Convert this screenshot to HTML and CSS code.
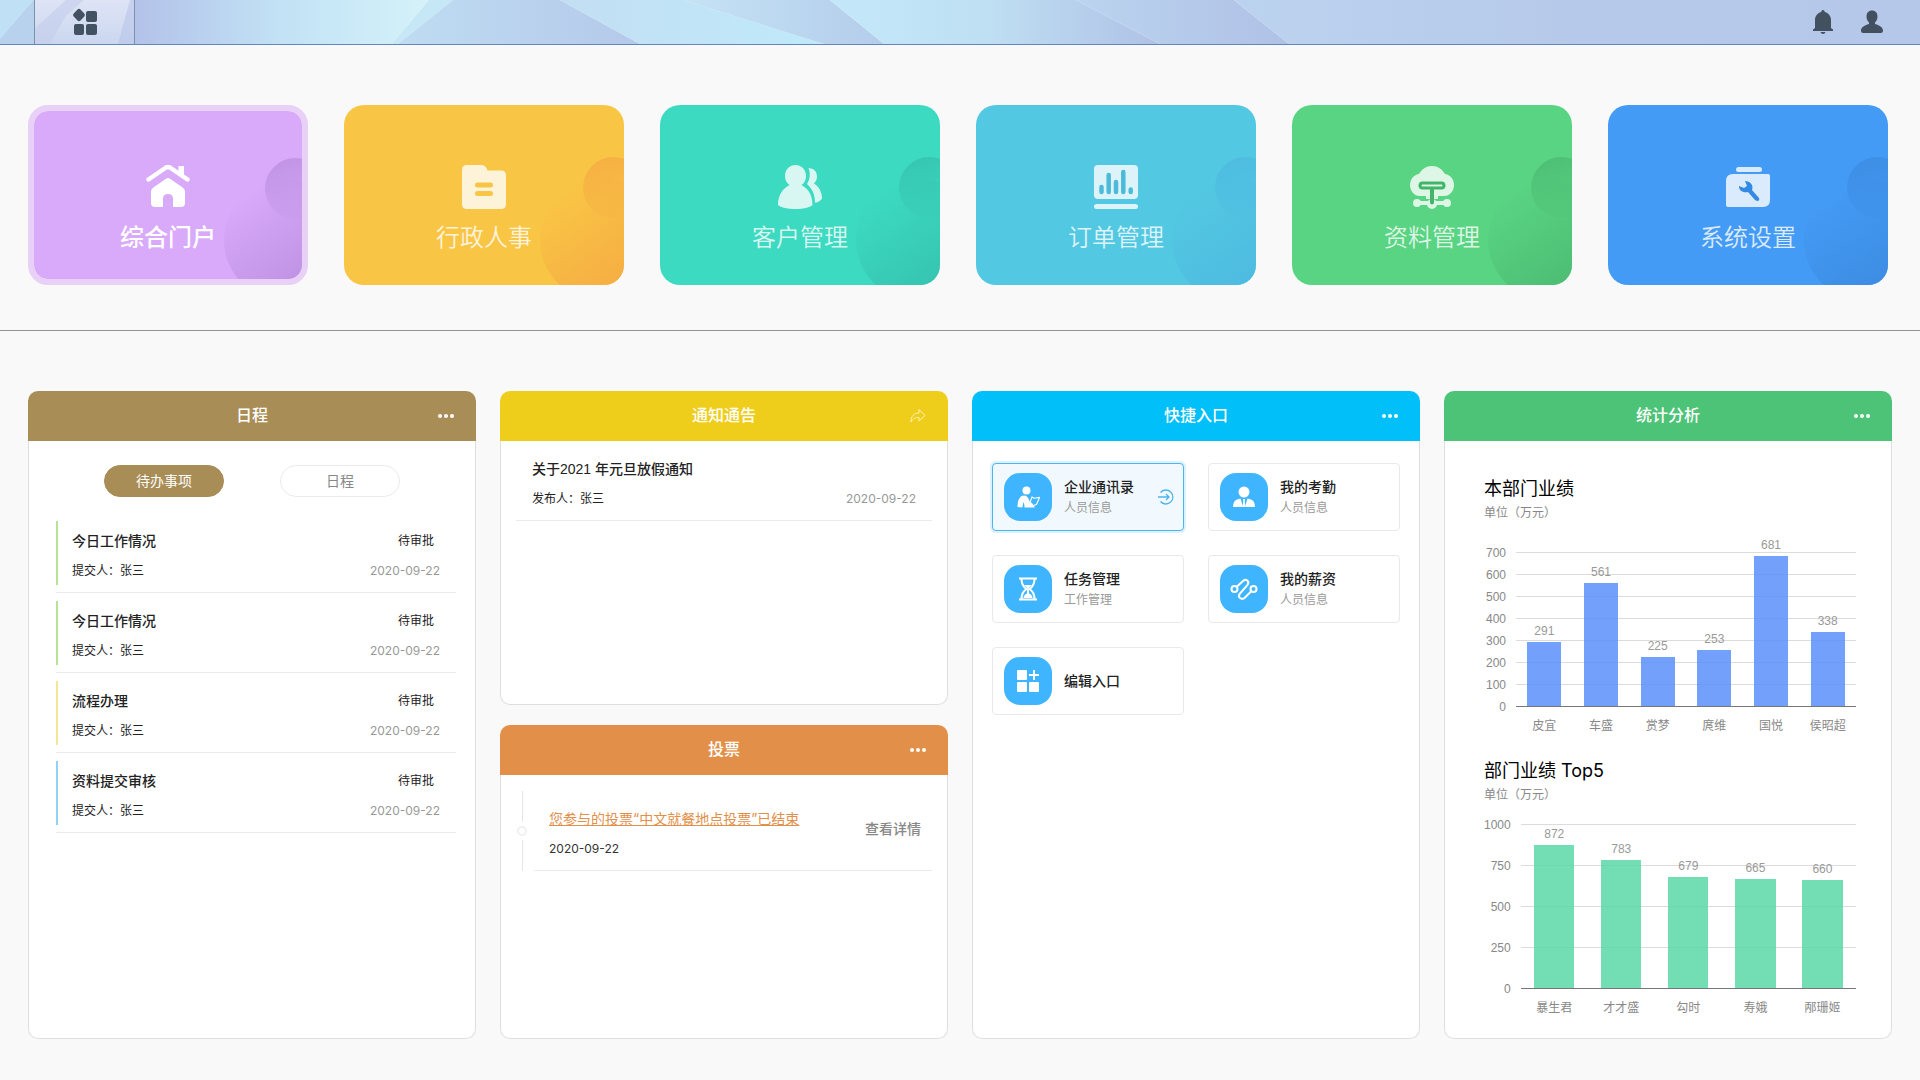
FILE: index.html
```html
<!DOCTYPE html>
<html lang="zh-CN">
<head>
<meta charset="utf-8">
<meta name="viewport" content="width=device-width, initial-scale=1">
<title>综合门户</title>
<link rel="stylesheet" href="styles.css">
</head>
<body>
<header class="topbar">
  <svg class="topbar-art" viewBox="0 0 1920 45" preserveAspectRatio="none" aria-hidden="true">
    <defs>
      <linearGradient id="g1"><stop offset="0" stop-color="#b3c2e9"/><stop offset=".5" stop-color="#c2e2f5"/><stop offset="1" stop-color="#d5f2fa"/></linearGradient>
      <linearGradient id="g2"><stop offset="0" stop-color="#bfdcf2"/><stop offset="1" stop-color="#b5c9ea"/></linearGradient>
      <linearGradient id="g3"><stop offset="0" stop-color="#c3def3"/><stop offset="1" stop-color="#bfeafa"/></linearGradient>
      <linearGradient id="g4"><stop offset="0" stop-color="#c5e2f5"/><stop offset="1" stop-color="#b4cdeb"/></linearGradient>
      <linearGradient id="g5"><stop offset="0" stop-color="#c4e8fa"/><stop offset=".45" stop-color="#bfe0f3"/><stop offset="1" stop-color="#b0c2e6"/></linearGradient>
      <linearGradient id="g6"><stop offset="0" stop-color="#bbd4ef"/><stop offset="1" stop-color="#b0c1e6"/></linearGradient>
      <linearGradient id="g7"><stop offset="0" stop-color="#bcd3ef"/><stop offset=".5" stop-color="#b6c9ea"/><stop offset="1" stop-color="#b5c8ea"/></linearGradient>
      <linearGradient id="g8" x2="0" y2="1"><stop offset="0" stop-color="#dfe4f6"/><stop offset="1" stop-color="#cad7ef"/></linearGradient>
    </defs>
    <path fill="#c0e0f5" d="M0 0H60L0 45z"/>
    <path fill="#b8d2ee" d="M0 40L34 0H140V45H0z"/>
    <path fill="url(#g1)" d="M135 0H429L392 45H135z"/>
    <path fill="#c6e7f6" d="M429 0H453L398 45H392z"/>
    <path fill="url(#g2)" d="M453 0H560L640 45H398z"/>
    <path fill="url(#g3)" d="M560 0H683L824 45H640z"/>
    <path fill="url(#g4)" d="M683 0H830L884 45H824z"/>
    <path fill="url(#g5)" d="M830 0H1076L1160 45H884z"/>
    <path fill="url(#g6)" d="M1076 0H1234L1289 45H1160z"/>
    <path fill="url(#g7)" d="M1234 0H1920V45H1289z"/>
    <path fill="url(#g8)" d="M34 0H135V45H34z"/>
    <path fill="#c3cdeb" opacity=".6" d="M66 0H84L66 16L50 45H34V30z"/>
    <path fill="#b9c5e9" opacity=".6" d="M135 0V45H118L130 0z"/>
  </svg>
  <button class="apps" type="button" aria-label="应用">
    <svg width="28" height="28" viewBox="0 0 28 28" fill="#435263"><path d="M8 .8q.9 0 1.500.7l4 4.300q.9 1.200 0 2.400l-4 4.300q-1.500 1.300-3 0l-4-4.300q-.9-1.200 0-2.400l4-4.300q.6-.7 1.500-.7z"/><rect x="15" y="3" width="11" height="11" rx="2"/><rect x="3" y="16" width="10" height="11" rx="2"/><rect x="15" y="16" width="11" height="11" rx="2"/></svg>
  </button>
  <div class="tools">
    <button class="tool" type="button" aria-label="消息"><svg width="24" height="26" viewBox="0 0 24 26" fill="#42505f"><path d="M12 1c1 0 1.600.8 1.800 2 3.700 1 6.200 4 6.200 8v8l2 1.500V22H2v-1.500L4 19v-8c0-4 2.500-7 6.200-8 .2-1.200.8-2 1.800-2zM9.500 23h5q-.5 2-2.500 2t-2.500-2z"/></svg></button>
    <button class="tool" type="button" aria-label="用户"><svg width="24" height="26" viewBox="0 0 24 26" fill="#42505f"><path d="M12 1.500c3.500 0 5.500 2.700 5.500 5.800 0 3-1 4.700-2.500 6.200v1.500c5 1.500 8 3.500 8 6.500 0 1.500-.7 2.500-2 2.500H3c-1.300 0-2-1-2-2.500 0-3 3-5 8-6.500v-1.500C7.500 12 6.500 10.300 6.500 7.300c0-3.100 2-5.800 5.500-5.800z"/></svg></button>
  </div>
</header>

<nav class="modules">
  <a class="module purple current" href="#"><svg width="44" height="44" viewBox="0 0 44 44"><path d="M2.500 14.500L20 2.500q2-1.300 4 0l17.500 12" fill="none" stroke="#fff" stroke-width="4.500" stroke-linecap="round" stroke-linejoin="round"/><path d="M32.500 1H38v10l-5.500-3.500z" fill="#fff"/><path d="M20 13.800q2-1.500 4 0l13 9q2 1.500 2 4V38q0 4-4 4h-8V34q0-5-5-5t-5 5v8H9q-4 0-4-4V26.800q0-2.500 2-4z" fill="#fff"/></svg><span>综合门户</span></a>
  <a class="module yellow" href="#"><svg width="44" height="44" viewBox="0 0 44 44"><path fill-rule="evenodd" fill="#fff" d="M5 0H19q5 0 6.500 5.500H39q5 0 5 5V39q0 5-5 5H5q-5 0-5-5V5q0-5 5-5zM15.500 17.500a2.500 2.500 0 0 0 0 5h13a2.500 2.500 0 0 0 0-5zM15.500 26a2.500 2.500 0 0 0 0 5h13a2.500 2.500 0 0 0 0-5z"/></svg><span>行政人事</span></a>
  <a class="module teal" href="#"><svg width="44" height="44" viewBox="0 0 44 44"><path fill="#fff" d="M17.500 0C24 0 28 5 28 11c0 4-1.500 7-4.500 9C30 23.500 34.500 29.500 34.500 40 29 45.300 6 45.300 0 40 0 29.500 5 23.500 11.500 20 8.500 18 7 15 7 11 7 5 11 0 17.500 0z"/><path fill="#fff" d="M30.500 3c5 0 8.500 3.500 8.500 8.500 0 3-1.200 5-3 7 5 3 8 8.500 8 15q-2 3.500-7 4.200c0-8-2.500-13.500-8-18.700 3.300-5 3.500-11 1.500-16z"/></svg><span>客户管理</span></a>
  <a class="module cyan" href="#"><svg width="44" height="44" viewBox="0 0 44 44"><path fill="#fff" d="M4 0H40q4 0 4 4V30q0 4-4 4H4q-4 0-4-4V4q0-4 4-4z"/><rect y="39" width="44" height="5" rx="2.500" fill="#fff"/><path d="M7.500 22v5M14.700 10v17M22 17v10M29.300 7v20M36.700 24.500v2.500" fill="none" stroke="#4bb9d8" stroke-width="4.500" stroke-linecap="round"/></svg><span>订单管理</span></a>
  <a class="module green" href="#"><svg width="44" height="44" viewBox="0 0 44 44"><path d="M9 9C12 4 16 1 22 1s10 3 13 8c6 1 9 6 9 11 0 6-4 11-10 11H10C4 31 0 26 0 20 0 15 3 10 9 9z" fill="#fff"/><path d="M20 30H16V34H28V30z" fill="#fff"/><path d="M7 38H37" stroke="#fff" stroke-width="4"/><circle cx="7" cy="38" r="4" fill="#fff"/><circle cx="37" cy="38" r="4" fill="#fff"/><circle cx="22" cy="39" r="5" fill="#fff"/><rect x="10" y="18" width="24" height="5" rx="2.500" fill="#fff" stroke="#3dae63" stroke-width="3"/><path d="M20 24h4v14q-2 3-4 0z" fill="#3dae63"/></svg><span>资料管理</span></a>
  <a class="module blue" href="#"><svg width="44" height="44" viewBox="0 0 44 44"><rect x="10" y="2" width="26" height="5" rx="2.500" fill="#fff"/><path fill="#fff" d="M7 9H42q2 0 2 2V35q0 7-7 7H2q-2 0-2-2V16q0-7 7-7z"/><path d="M19 16c5 0 9 4 7 9l7 8q1 3-2 3l-2-1-7-8c-5 1-9-1-9-6l5 2 3-2z" fill="#2f86e2"/></svg><span>系统设置</span></a>
</nav>

<main class="board">
  <section class="panel brown">
    <header class="panel-head"><h2>日程</h2><button class="more" type="button" aria-label="更多"><i></i><i></i><i></i></button></header>
    <div class="panel-body">
      <div class="tabs"><button class="tab on" type="button">待办事项</button><button class="tab" type="button">日程</button></div>
      <ul class="tasks">
        <li class="task lime"><div class="task-in"><p><strong>今日工作情况</strong><span class="state">待审批</span></p><p><span>提交人：张三</span><time>2020-09-22</time></p></div></li>
        <li class="task lime"><div class="task-in"><p><strong>今日工作情况</strong><span class="state">待审批</span></p><p><span>提交人：张三</span><time>2020-09-22</time></p></div></li>
        <li class="task sand"><div class="task-in"><p><strong>流程办理</strong><span class="state">待审批</span></p><p><span>提交人：张三</span><time>2020-09-22</time></p></div></li>
        <li class="task sky"><div class="task-in"><p><strong>资料提交审核</strong><span class="state">待审批</span></p><p><span>提交人：张三</span><time>2020-09-22</time></p></div></li>
      </ul>
    </div>
  </section>

  <div class="stack">
    <section class="panel gold">
      <header class="panel-head"><h2>通知通告</h2><button class="more" type="button" aria-label="转到"><svg width="16" height="16" viewBox="0 0 16 16" fill="none" stroke="#fff3b8" stroke-width="1" stroke-linejoin="round"><path d="M1 14C1 8 4 5 9 5V1.500L15 7.500 9 13V9.500C5.500 9.300 3 10.500 1 14z"/></svg></button></header>
      <div class="panel-body">
        <article class="notice"><p><strong>关于2021 年元旦放假通知</strong></p><p><span>发布人：张三</span><time>2020-09-22</time></p></article>
      </div>
    </section>
    <section class="panel orange">
      <header class="panel-head"><h2>投票</h2><button class="more" type="button" aria-label="更多"><i></i><i></i><i></i></button></header>
      <div class="panel-body">
        <article class="vote">
          <div class="rail"><b></b><em></em><b></b></div>
          <div class="vote-in">
            <div><p><a class="vote-link" href="#">您参与的投票“中文就餐地点投票”已结束</a></p><p><time>2020-09-22</time></p></div>
            <a class="detail" href="#">查看详情</a>
          </div>
        </article>
      </div>
    </section>
  </div>

  <section class="panel azure">
    <header class="panel-head"><h2>快捷入口</h2><button class="more" type="button" aria-label="更多"><i></i><i></i><i></i></button></header>
    <div class="panel-body entries">
      <a class="entry on" href="#"><span class="glyph"><svg width="24" height="24" viewBox="0 0 24 24" fill="#fff"><circle cx="10.500" cy="5.500" r="4"/><path d="M1.500 22C1.500 15 4 10.500 8 10.500c3.500 0 4.500 3 6 6.500l2 1 3 4.500H8.500c0-2 0-3.500-1.500-5.500.2 2-.2 4-.8 5.500z"/><path d="M16 12l2 1.300 5.500-.8-3 7-4 1.200-2.500-3.500z" fill="none" stroke="#fff" stroke-width="1.100"/></svg></span><span class="words"><strong>企业通讯录</strong><small>人员信息</small></span><svg class="go" width="16" height="16" viewBox="0 0 16 16" fill="none" stroke="#4fb3ee" stroke-width="1.300"><path d="M2.500 3.500a7 7 0 1 1 0 9M0 8H11M8 5l3 3-3 3"/></svg></a>
      <a class="entry" href="#"><span class="glyph"><svg width="24" height="24" viewBox="0 0 24 24" fill="#fff"><circle cx="12" cy="7" r="5.500"/><path d="M1 22q0-6 4-7.500l3.500-1L11 22zM23 22q0-6-4-7.500l-3.500-1L13 22zM10.800 14h2.400l-.5 2 .8 6h-3l.8-6z"/></svg></span><span class="words"><strong>我的考勤</strong><small>人员信息</small></span></a>
      <a class="entry" href="#"><span class="glyph"><svg width="24" height="24" viewBox="0 0 24 24" fill="none" stroke="#fff" stroke-width="2"><path d="M3 1.500H21M3 22.500H21M5.500 2c0 5 1 7.500 5 10-4 2.500-5 5-5 10M18.500 2c0 5-1 7.500-5 10 4 2.500 5 5 5 10"/><path d="M8 8H16L12 12zM7.500 21q0-3 3.500-4.500V12h2v4.500q3.500 1.500 3.500 4.500z" fill="#fff" stroke="none"/></svg></span><span class="words"><strong>任务管理</strong><small>工作管理</small></span></a>
      <a class="entry" href="#"><span class="glyph"><svg width="28" height="24" viewBox="0 0 28 24" fill="none" stroke="#fff" stroke-width="2"><circle cx="4.500" cy="12" r="3"/><circle cx="23.500" cy="12" r="3"/><path d="M6.500 10L13 4c3-2.500 7 0 4.500 4L9.500 17c-2 4 2.500 6 5 4l7-7"/></svg></span><span class="words"><strong>我的薪资</strong><small>人员信息</small></span></a>
      <a class="entry" href="#"><span class="glyph"><svg width="24" height="24" viewBox="0 0 24 24" fill="#fff"><rect x="1" y="1" width="10" height="10" rx="1"/><rect x="1" y="13" width="10" height="10" rx="1"/><rect x="13" y="13" width="10" height="10" rx="1"/><path d="M17 1h2v4h4v2h-4v4h-2V7h-4V5h4z"/></svg></span><span class="words"><strong>编辑入口</strong></span></a>
    </div>
  </section>

  <section class="panel emerald">
    <header class="panel-head"><h2>统计分析</h2><button class="more" type="button" aria-label="更多"><i></i><i></i><i></i></button></header>
    <div class="panel-body stats">
      <figure class="chart six">
        <figcaption><h3>本部门业绩</h3><p>单位（万元）</p></figcaption>
        <div class="graph">
          <ul class="axis"><li>700</li><li>600</li><li>500</li><li>400</li><li>300</li><li>200</li><li>100</li><li>0</li></ul>
          <div class="area">
            <div class="plot">
              <div class="col"><span>291</span><i style="height:41.600%"></i></div>
              <div class="col"><span>561</span><i style="height:80.100%"></i></div>
              <div class="col"><span>225</span><i style="height:32.100%"></i></div>
              <div class="col"><span>253</span><i style="height:36.100%"></i></div>
              <div class="col"><span>681</span><i style="height:97.300%"></i></div>
              <div class="col"><span>338</span><i style="height:48.300%"></i></div>
            </div>
            <ul class="names"><li>皮宜</li><li>车盛</li><li>赏梦</li><li>庹维</li><li>国悦</li><li>侯昭超</li></ul>
          </div>
        </div>
      </figure>
      <figure class="chart five">
        <figcaption><h3>部门业绩 Top5</h3><p>单位（万元）</p></figcaption>
        <div class="graph">
          <ul class="axis"><li>1000</li><li>750</li><li>500</li><li>250</li><li>0</li></ul>
          <div class="area">
            <div class="plot">
              <div class="col"><span>872</span><i style="height:87.200%"></i></div>
              <div class="col"><span>783</span><i style="height:78.300%"></i></div>
              <div class="col"><span>679</span><i style="height:67.900%"></i></div>
              <div class="col"><span>665</span><i style="height:66.500%"></i></div>
              <div class="col"><span>660</span><i style="height:66%"></i></div>
            </div>
            <ul class="names"><li>暴生君</li><li>才才盛</li><li>勾时</li><li>寿娥</li><li>邴珊姬</li></ul>
          </div>
        </div>
      </figure>
    </div>
  </section>
</main>
</body>
</html>
```
FILE: styles.css
```css
* { box-sizing: border-box; margin: 0; padding: 0; }
body { background: #f9f9f9; color: #222; font: 14px/20px "Liberation Sans", "Noto Sans CJK SC", sans-serif; }
ul { list-style: none; }
a { color: inherit; text-decoration: none; }
button { border: 0; background: none; font: inherit; color: inherit; cursor: pointer; }
svg { display: block; flex: none; }
strong, h2 { font-weight: 500; }

.topbar { position: relative; display: flex; justify-content: space-between; align-items: center; height: 45px; padding: 0 36px 0 34px; border-bottom: 1px solid #6486bd; }
.topbar-art { position: absolute; inset: 0; z-index: -1; width: 100%; height: 100%; }
.apps { display: flex; align-items: center; justify-content: center; width: 101px; height: 44px; border: solid #7d91ad; border-width: 0 1px; }
.tools { display: flex; gap: 25px; }

.modules { display: grid; grid-template-columns: repeat(6, 1fr); gap: 36px; padding: 60px 32px 45px 28px; border-bottom: 1px solid #949494; }
.module { position: relative; overflow: hidden; display: flex; flex-direction: column; align-items: center; height: 180px; padding-top: 60px; border-radius: 20px; background: var(--tile); background-clip: padding-box; color: #fff; font-size: 24px; line-height: 32px; font-weight: 350; }
.module svg, .module span { opacity: .8; }
.module span { margin-top: 13px; }
.module::before, .module::after { content: ""; position: absolute; border-radius: 50%; }
.module::before { right: -20px; top: 52px; width: 61px; height: 61px; background: linear-gradient(160deg, var(--shade), transparent); opacity: .8; }
.module::after { right: -38px; top: 74px; width: 122px; height: 122px; background: linear-gradient(325deg, var(--shade) 15%, transparent 85%); opacity: .9; }
.module.current { padding-top: 54px; border: 6px solid #e8d0f6; font-weight: 500; }
.module.current::before { right: -24px; top: 47px; }
.module.current::after { right: -44px; top: 68px; }
.module.current svg, .module.current span { opacity: 1; }
.purple { --tile: #d9a9fa; --shade: #b78cdc; }
.yellow { --tile: #f9c545; --shade: #f5a842; }
.teal { --tile: #3cdac0; --shade: #34bfae; }
.cyan { --tile: #53c8e2; --shade: #4cb8e0; }
.green { --tile: #59d483; --shade: #4ab870; }
.blue { --tile: #449bf5; --shade: #3b89de; }

.board { display: grid; grid-template-columns: repeat(4, 1fr); gap: 24px; padding: 60px 28px 41px; }
.stack { display: grid; grid-template-rows: 1fr 1fr; gap: 20px; }
.panel { display: flex; flex-direction: column; min-width: 0; }
.panel-head { display: grid; grid-template-columns: 1fr auto 1fr; align-items: center; height: 50px; padding: 0 22px; border-radius: 10px 10px 0 0; background: var(--head); color: #fff; }
.panel-head h2 { grid-column: 2; font-size: 16px; }
.panel-body { flex: 1; border: 1px solid #dfdfdf; border-top: 0; border-radius: 0 0 10px 10px; background: #fff; }
.brown { --head: #a98d57; }
.gold { --head: #efcd1b; }
.orange { --head: #e28f49; }
.azure { --head: #00bff9; }
.emerald { --head: #4dc377; }
.more { display: flex; gap: 2px; justify-self: end; padding: 4px 0; }
.more i { width: 4px; height: 4px; border-radius: 50%; background: #fff; }
time { font-family: Inter, sans-serif; color: #999; }

.tabs { display: flex; justify-content: center; gap: 56px; padding: 24px 0; }
.tab { width: 120px; height: 32px; border: 1px solid #ebebeb; border-radius: 16px; color: #888; }
.tab.on { border-color: var(--head); background: var(--head); color: #fff; }
.tasks { display: grid; gap: 8px; padding: 0 19px 0 27px; }
.task { padding-bottom: 7px; border-bottom: 1px solid #ececec; font-size: 12px; }
.task-in { display: grid; align-content: center; gap: 10px; height: 64px; padding: 6px 16px 0 14px; border-left: 2px solid var(--mark); }
.task p, .notice p { display: flex; justify-content: space-between; }
.task strong, .notice strong { font-size: 14px; }
.state { padding-right: 6px; }
.lime { --mark: #b5e397; }
.sand { --mark: #f6e595; }
.sky { --mark: #92d2f5; }

.notice { display: grid; gap: 10px; margin: 0 15px; padding: 18px 16px 11px; border-bottom: 1px solid #ececec; font-size: 12px; }
.vote { display: flex; gap: 6px; padding: 16px 15px 0; }
.rail { display: flex; flex-direction: column; align-items: center; gap: 4px; width: 12px; }
.rail b { flex: 1; width: 1px; background: #e6e6e6; }
.rail em { width: 10px; height: 10px; border: 2px solid #f0f0f0; border-radius: 50%; }
.vote-in { flex: 1; display: flex; align-items: flex-start; justify-content: space-between; padding: 18px 11px 11px 15px; border-bottom: 1px solid #ececec; font-size: 12px; }
.vote-in p + p { margin-top: 9px; }
.vote time { color: #333; }
.vote-link { color: #e28f49; font-family: Inter, "Noto Sans CJK SC", sans-serif; font-size: 14px; text-decoration: underline; }
.detail { padding-top: 10px; color: #888; font-size: 14px; font-weight: 500; }

.entries { display: grid; grid-template-columns: 1fr 1fr; align-content: start; gap: 24px; padding: 22px 19px; }
.entry { display: flex; align-items: center; gap: 12px; height: 68px; padding: 0 9px 0 11px; border: 1px solid #e9e9e9; border-radius: 4px; }
.entry.on { border-color: #4fb3f0; background: #f2f9fe; box-shadow: 0 0 0 2px #d9f2fe; }
.glyph { display: flex; flex: none; align-items: center; justify-content: center; width: 48px; height: 48px; border-radius: 16px; background: #40b5ff; }
.words { display: grid; gap: 2px; }
.words strong { font-size: 14px; }
.words small { font-size: 12px; line-height: 18px; color: #999; }
.go { margin-left: auto; }

.stats { padding: 34px 35px 20px 39px; }
.chart figcaption { color: #888; font-size: 12px; }
.chart h3 { color: #000; font-family: Inter, "Noto Sans CJK SC", sans-serif; font-size: 18px; line-height: 28px; font-weight: 400; }
.graph { display: flex; gap: 10px; color: #888; font-size: 12px; }
.axis { display: flex; flex-direction: column; justify-content: space-between; min-width: 22px; height: calc(var(--plot) + 21px); padding-top: 1px; text-align: right; }
.area { flex: 1; padding-top: 10px; }
.plot { display: grid; grid-auto-flow: column; grid-auto-columns: 1fr; height: calc(var(--plot) + 1px); border-bottom: 1px solid #777; background: repeating-linear-gradient(#dcdcdc 0 1px, transparent 1px var(--step)); }
.col { display: flex; flex-direction: column; align-items: center; justify-content: flex-end; height: var(--plot); color: #999; }
.col span { line-height: 22px; }
.col i { flex: none; width: 60%; background: var(--bar); }
.names { display: grid; grid-auto-flow: column; grid-auto-columns: 1fr; padding-top: 9px; text-align: center; white-space: nowrap; }
.six { --plot: 154px; --step: 22px; --bar: rgba(91, 143, 249, .85); margin-bottom: 21px; }
.six .graph { padding-top: 19px; }
.five { --plot: 164px; --step: 41px; --bar: rgba(90, 216, 166, .85); }
.five .graph { padding-top: 9px; }
```
